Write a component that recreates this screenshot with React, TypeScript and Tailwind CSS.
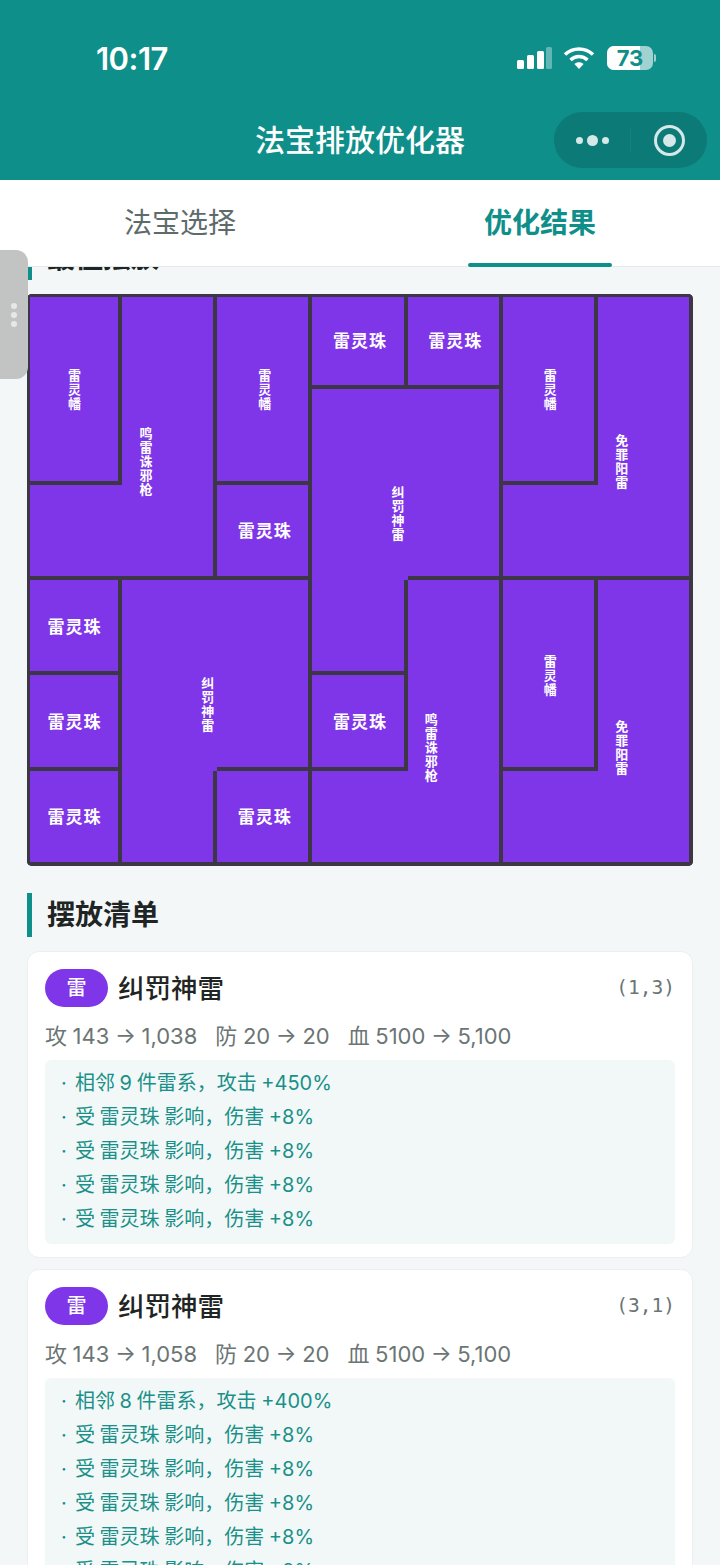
const FONT = "font-['Inter','Noto_Sans_CJK_SC',sans-serif]";

const BOARD = [
  ["a", "b", "c", "d", "e", "f", "g"],
  ["a", "b", "c", "h", "h", "f", "g"],
  ["b", "b", "i", "h", "h", "g", "g"],
  ["j", "k", "k", "h", "l", "m", "n"],
  ["o", "k", "k", "p", "l", "m", "n"],
  ["q", "k", "r", "l", "l", "n", "n"],
];

const NAMES: Record<string, string> = {
  a: "雷灵幡",
  b: "鸣雷诛邪枪",
  c: "雷灵幡",
  d: "雷灵珠",
  e: "雷灵珠",
  f: "雷灵幡",
  g: "免罪阳雷",
  h: "纠罚神雷",
  i: "雷灵珠",
  j: "雷灵珠",
  k: "纠罚神雷",
  l: "鸣雷诛邪枪",
  m: "雷灵幡",
  n: "免罪阳雷",
  o: "雷灵珠",
  p: "雷灵珠",
  q: "雷灵珠",
  r: "雷灵珠",
};

const CARDS = [
  {
    name: "纠罚神雷",
    pos: "(1,3)",
    attack: "143 → 1,038",
    effects: [
      "相邻 9 件雷系，攻击 +450%",
      "受 雷灵珠 影响，伤害 +8%",
      "受 雷灵珠 影响，伤害 +8%",
      "受 雷灵珠 影响，伤害 +8%",
      "受 雷灵珠 影响，伤害 +8%",
    ],
  },
  {
    name: "纠罚神雷",
    pos: "(3,1)",
    attack: "143 → 1,058",
    effects: [
      "相邻 8 件雷系，攻击 +400%",
      "受 雷灵珠 影响，伤害 +8%",
      "受 雷灵珠 影响，伤害 +8%",
      "受 雷灵珠 影响，伤害 +8%",
      "受 雷灵珠 影响，伤害 +8%",
      "受 雷灵珠 影响，伤害 +8%",
    ],
  },
];

function StatusBar() {
  return (
    <div className="flex h-[116px] shrink-0 items-center justify-between pl-[96px] pr-[64px] text-white">
      <span className="text-[31px] font-semibold leading-none tracking-[-0.5px]">10:17</span>
      <div className="flex items-center">
        <svg width="36" height="22" viewBox="0 0 36 22" fill="white">
          <rect x="1" y="13" width="7" height="9" rx="1.5" />
          <rect x="11" y="8" width="7" height="14" rx="1.5" />
          <rect x="21" y="4" width="7" height="18" rx="1.5" />
          <rect x="30" y="0" width="6" height="22" rx="1.5" opacity="0.35" />
        </svg>
        <svg className="ml-[11px]" width="32" height="24" viewBox="0 0 32 24" fill="none" stroke="white" strokeWidth="3.6">
          <path d="M2 8.5c8-7.4 20-7.4 28 0" />
          <path d="M7.5 14c5-4.6 12-4.6 17 0" />
          <path d="M16 23l-4.6-5c2.6-2.2 6.6-2.2 9.2 0z" fill="white" stroke="none" />
        </svg>
        <div className="relative ml-[12px] flex h-[24px] w-[46px] items-center overflow-hidden rounded-[7px] bg-white/60">
          <div className="h-full w-[33px] bg-white" />
          <span className="absolute inset-0 text-center text-[22px] font-bold leading-[24px] text-[#0f8f8a]">73</span>
        </div>
        <div className="ml-[1px] h-[8px] w-[2px] rounded-r-full bg-white/60" />
      </div>
    </div>
  );
}

function NavBar() {
  return (
    <div className="relative flex h-[64px] shrink-0 items-center justify-center pb-[16px]">
      <span className="text-[30px] font-medium leading-none text-white">法宝排放优化器</span>
      <div className="absolute right-[13px] top-[-4px] flex h-[56px] w-[153px] items-center rounded-full bg-[#0c7a76]">
        <div className="flex h-[26px] w-[77px] items-center justify-center gap-[4px] border-r border-[#0f8f8a]/50">
          <span className="h-[7px] w-[7px] rounded-full bg-[#d5e9e8]" />
          <span className="h-[11px] w-[11px] rounded-full bg-[#d5e9e8]" />
          <span className="h-[7px] w-[7px] rounded-full bg-[#d5e9e8]" />
        </div>
        <div className="flex flex-1 items-center justify-center">
          <div className="flex h-[31px] w-[31px] items-center justify-center rounded-full border-[3px] border-[#d5e9e8]">
            <span className="h-[13px] w-[13px] rounded-full bg-[#d5e9e8]" />
          </div>
        </div>
      </div>
    </div>
  );
}

function Tabs() {
  return (
    <div className="z-10 flex h-[87px] shrink-0 border-b border-[#e3e8e8] bg-white">
      <div className="flex flex-1 items-center justify-center text-[28px] leading-none text-[#5d6b6a]">法宝选择</div>
      <div className="relative flex flex-1 items-center justify-center text-[28px] font-semibold leading-none text-[#0f8f8a]">
        优化结果
        <div className="absolute bottom-[-1px] left-[108px] h-[4px] w-[144px] rounded-full bg-[#0f8f8a]" />
      </div>
    </div>
  );
}

function SectionTitle({ children }: { children: string }) {
  return (
    <div className="flex h-[44px] items-center border-l-[5px] border-[#0f8f8a] pl-[15px] text-[28px] font-bold leading-none text-[#1f2524]">
      {children}
    </div>
  );
}

function Board() {
  const labels = Object.keys(NAMES).map((id) => {
    let x = 0;
    let y = 0;
    let n = 0;
    BOARD.forEach((row, r) =>
      row.forEach((cell, c) => {
        if (cell === id) {
          x += c + 0.5;
          y += r + 0.5;
          n += 1;
        }
      }),
    );
    return { id, wide: n === 1, left: (x / n / 7) * 100, top: (y / n / 6) * 100 };
  });

  return (
    <div className="relative mt-[14px] h-[572px] overflow-hidden rounded-[5px]">
      <div className="grid h-full grid-cols-7 grid-rows-6">
        {BOARD.flatMap((row, r) =>
          row.map((cell, c) => {
            const right = c === 6 || row[c + 1] !== cell;
            const bottom = r === 5 || BOARD[r + 1][c] !== cell;
            return (
              <div
                key={`${r}-${c}`}
                className={`border-[#3d3644] bg-[#7f36e8] ${right ? "border-r-[4px]" : ""} ${bottom ? "border-b-[4px]" : ""} ${c === 0 ? "border-l-[3px]" : ""} ${r === 0 ? "border-t-[3px]" : ""}`}
              />
            );
          }),
        )}
      </div>
      {labels.map((l) => (
        <div
          key={l.id}
          style={{ left: `${l.left}%`, top: `${l.top}%` }}
          className={
            l.wide
              ? "absolute -mt-[1px] -translate-x-1/2 -translate-y-1/2 whitespace-nowrap text-[17px] font-semibold leading-none tracking-[1px] text-white"
              : "absolute w-[14px] -translate-x-1/2 -translate-y-1/2 text-center text-[13px] font-semibold leading-[14px] text-white"
          }
        >
          {NAMES[l.id]}
        </div>
      ))}
    </div>
  );
}

function PlacementCard({ card }: { card: (typeof CARDS)[number] }) {
  return (
    <div className="rounded-[12px] border border-[#eceff0] bg-white px-[17px] pb-[13px] pt-[17px]">
      <div className="flex h-[38px] items-center">
        <span className="flex h-[38px] w-[63px] items-center justify-center rounded-full bg-[#7f36e8] text-[20px] font-medium leading-none text-white">雷</span>
        <span className="ml-[10px] text-[26.5px] font-medium leading-none text-[#1f2524]">{card.name}</span>
        <span className="ml-auto font-['DejaVu_Sans_Mono',monospace] text-[19.5px] leading-none text-[#6b7574]">{card.pos}</span>
      </div>
      <div className="mt-[14px] flex h-[30px] items-center gap-[18px] text-[22px] leading-none text-[#6b7574] [word-spacing:-0.6px]">
        <span>攻 {card.attack}</span>
        <span>防 20 → 20</span>
        <span>血 5100 → 5,100</span>
      </div>
      <div className="mt-[9px] rounded-[6px] bg-[#f2f8f8] pb-[8px] pl-[16px] pr-[16px] pt-[6px] text-[20px] leading-[34px] text-[#1a9088] [word-spacing:-1px]">
        {card.effects.map((effect, i) => (
          <div key={i} className="flex">
            <span className="w-[14px] shrink-0">·</span>
            <span>{effect}</span>
          </div>
        ))}
      </div>
    </div>
  );
}

export default function App() {
  return (
    <div className={`relative flex h-[1565px] w-[720px] flex-col overflow-hidden bg-[#f4f7f7] ${FONT}`}>
      <div className="shrink-0 bg-[#0f8f8a]">
        <StatusBar />
        <NavBar />
      </div>
      <Tabs />
      <div className="-mt-[31px] flex flex-col px-[27px]">
        <SectionTitle>最佳摆放</SectionTitle>
        <Board />
        <div className="mt-[27px]">
          <SectionTitle>摆放清单</SectionTitle>
        </div>
        <div className="mt-[14px] flex flex-col gap-[11px]">
          {CARDS.map((card) => (
            <PlacementCard key={card.pos} card={card} />
          ))}
        </div>
      </div>
      <div className="absolute left-0 top-[250px] z-20 flex h-[129px] w-[28px] flex-col items-center justify-center gap-[3px] rounded-r-[12px] bg-[#c2c4c3]">
        <span className="h-[6px] w-[6px] rounded-full bg-[#e6e8e7]" />
        <span className="h-[6px] w-[6px] rounded-full bg-[#e6e8e7]" />
        <span className="h-[6px] w-[6px] rounded-full bg-[#e6e8e7]" />
      </div>
    </div>
  );
}
